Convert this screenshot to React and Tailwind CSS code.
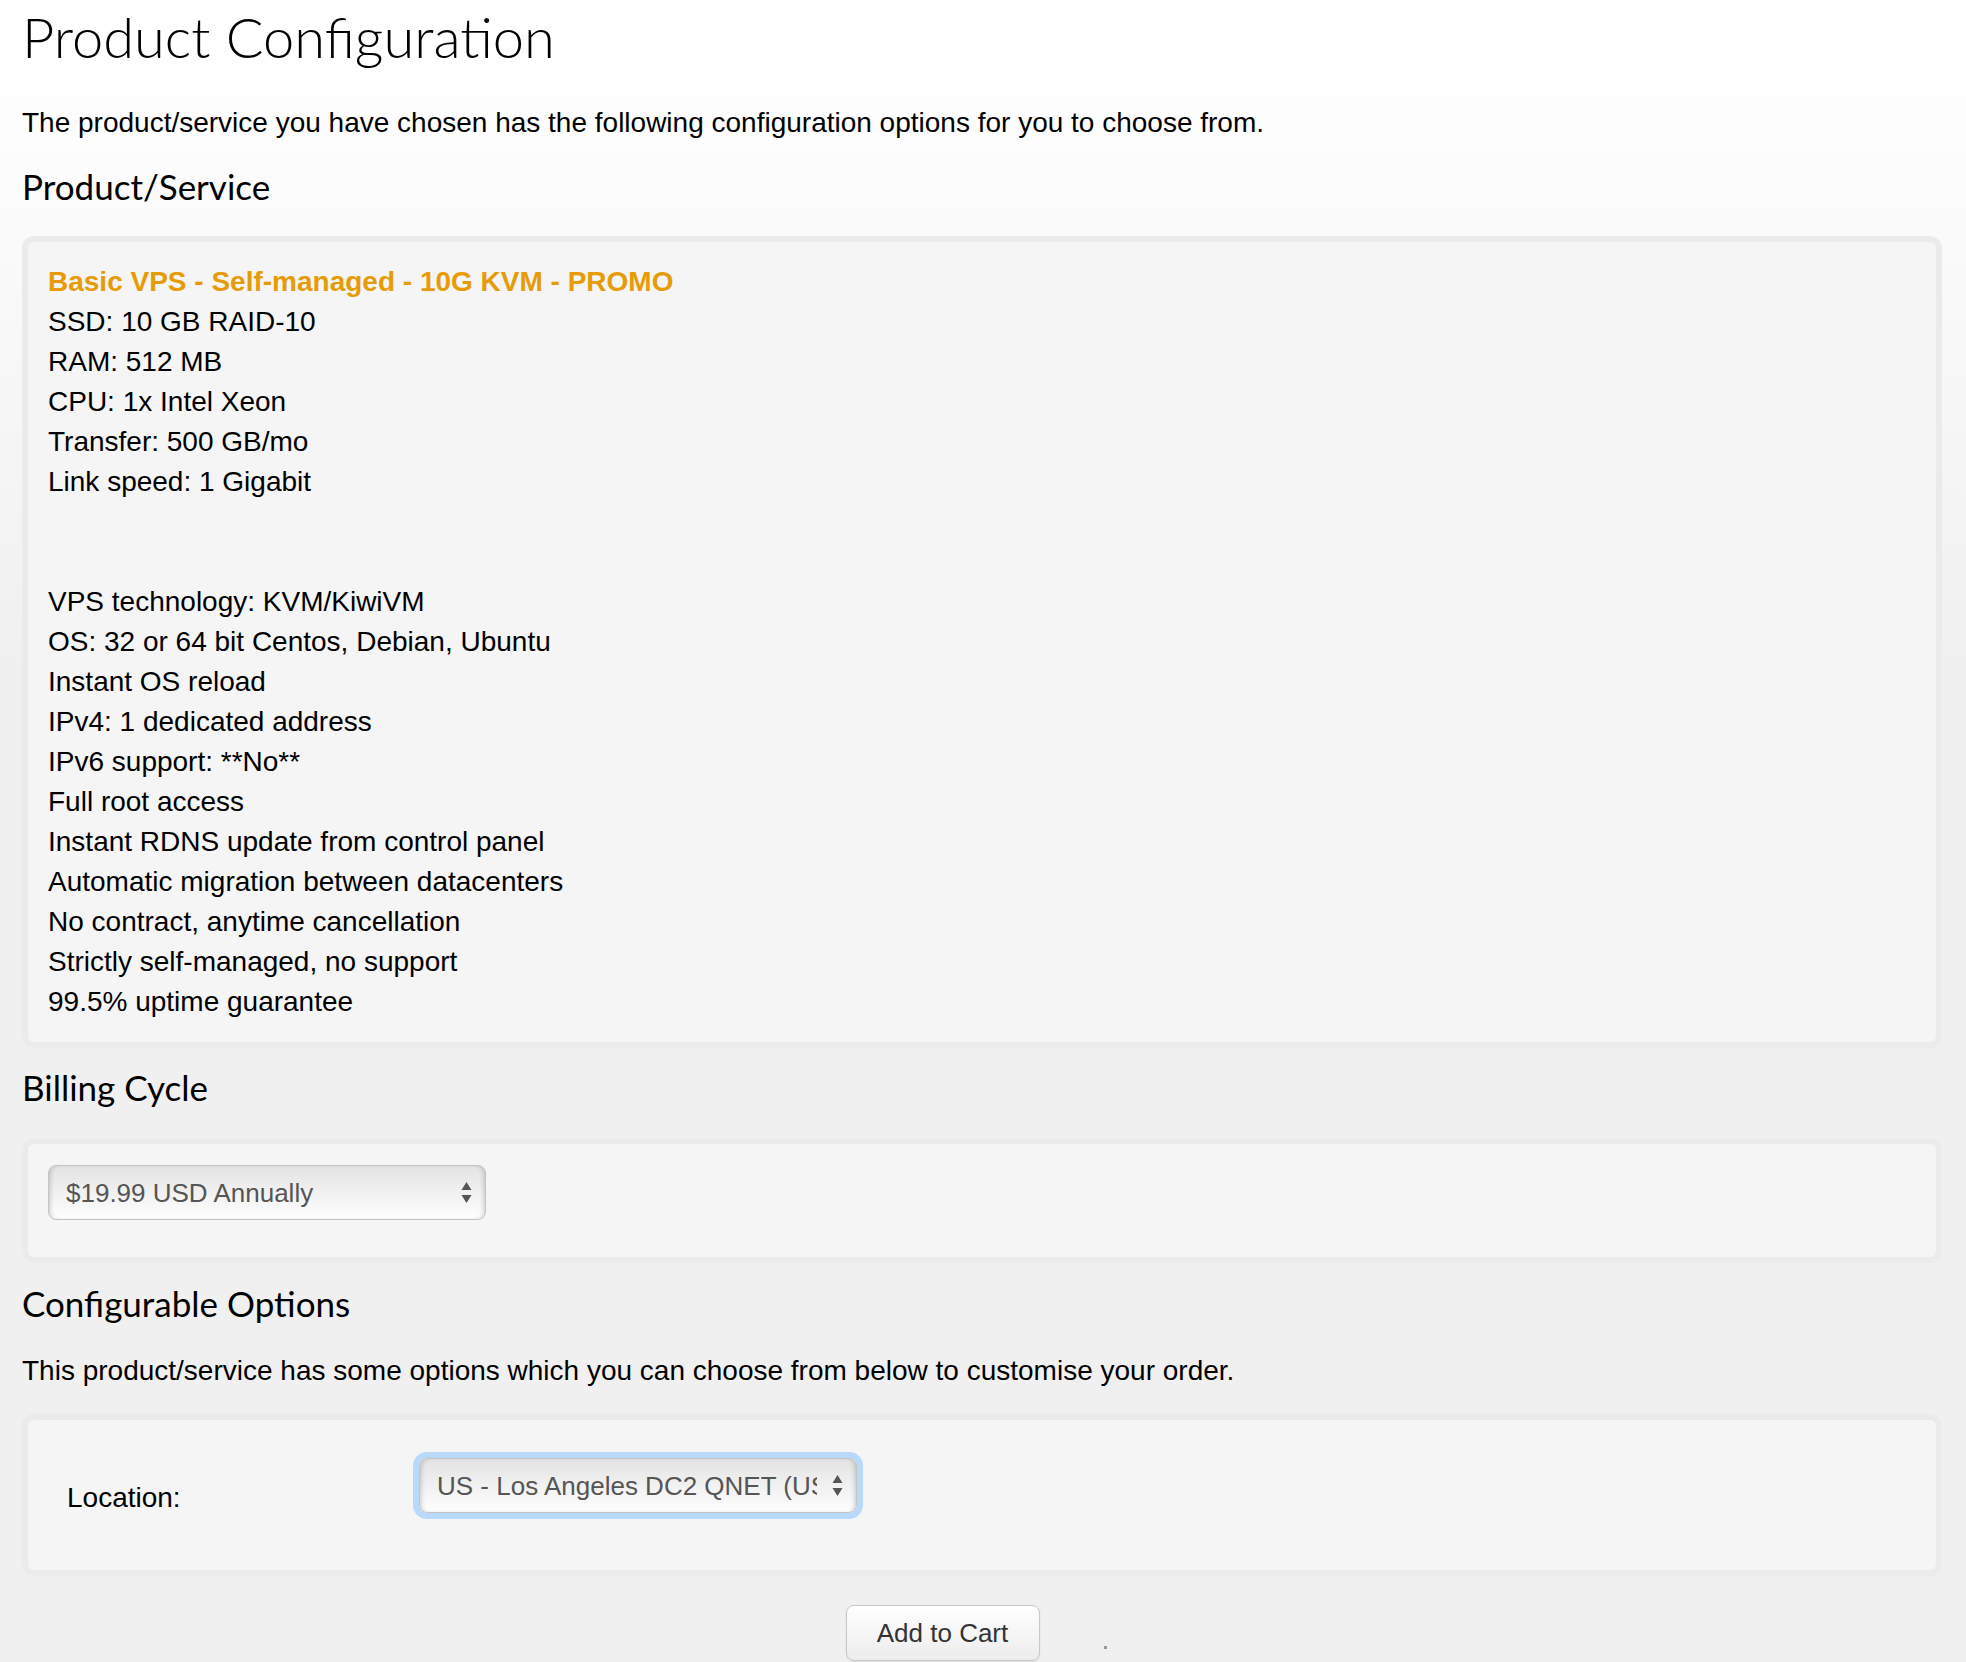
import React from "react";

const specsTop = [
  "SSD: 10 GB RAID-10",
  "RAM: 512 MB",
  "CPU: 1x Intel Xeon",
  "Transfer: 500 GB/mo",
  "Link speed: 1 Gigabit",
];

const specsBottom = [
  "VPS technology: KVM/KiwiVM",
  "OS: 32 or 64 bit Centos, Debian, Ubuntu",
  "Instant OS reload",
  "IPv4: 1 dedicated address",
  "IPv6 support: **No**",
  "Full root access",
  "Instant RDNS update from control panel",
  "Automatic migration between datacenters",
  "No contract, anytime cancellation",
  "Strictly self-managed, no support",
  "99.5% uptime guarantee",
];

const Arrows = () => (
  <svg width="11" height="21" viewBox="0 0 11 21" className="shrink-0">
    <path d="M5.5 0 L10.5 8 L0.5 8 Z" fill="#555" />
    <path d="M5.5 21 L10.5 13 L0.5 13 Z" fill="#555" />
  </svg>
);

const FakeSelect = ({ children, focused }) => (
  <div
    className={`w-[438px] h-[55px] flex items-center pl-[17px] pr-[13px] rounded-[8px] border border-[#c4c4c4] bg-linear-to-b from-[#e3e3e3] via-[#f1f1f1] to-[#fefefe] text-[#555] text-[26px] ${
      focused
        ? "shadow-[0_0_0_6px_#b8d9f9,inset_4px_0_5px_-3px_rgba(0,0,0,0.2),inset_-4px_0_5px_-3px_rgba(0,0,0,0.2)]"
        : "shadow-[inset_4px_0_5px_-3px_rgba(0,0,0,0.2),inset_-4px_0_5px_-3px_rgba(0,0,0,0.2)]"
    }`}
  >
    <div className="w-[382px] mr-[15px] overflow-hidden whitespace-nowrap">{children}</div>
    <Arrows />
  </div>
);

const Box = ({ className, children }) => (
  <div className={`rounded-[12px] border-[6px] border-[#ebebeb] bg-[#f5f5f5] ${className}`}>{children}</div>
);

const headingFont = { fontFamily: "Lato, 'Open Sans', sans-serif" };

export default function App() {
  return (
    <div
      className="min-h-screen bg-linear-to-b from-white from-[3%] to-[#f0f0f0] to-[40%] pl-[22px] pr-[24px] text-black text-[28px] leading-[40px]"
      style={{ fontFamily: "'Liberation Sans', Arial, sans-serif" }}
    >
      <h1 className="pt-[7px] text-[56px] leading-[60px] font-light" style={headingFont}>
        Product Configuration
      </h1>

      <p className="mt-[36px]">
        The product/service you have chosen has the following configuration options for you to choose from.
      </p>

      <h2 className="mt-[23px] text-[35px] leading-[40px] font-normal" style={headingFont}>
        Product/Service
      </h2>

      <Box className="mt-[30px] px-[20px] py-[20px]">
        <div className="font-bold text-[#e69c08]">Basic VPS - Self-managed - 10G KVM - PROMO</div>
        {specsTop.map((s) => (
          <div key={s}>{s}</div>
        ))}
        <div className="h-[80px]" />
        {specsBottom.map((s) => (
          <div key={s}>{s}</div>
        ))}
      </Box>

      <h2 className="mt-[19px] text-[35px] leading-[40px] font-normal" style={headingFont}>
        Billing Cycle
      </h2>

      <Box className="mt-[31px] px-[20px] pt-[21px] pb-[37px]">
        <FakeSelect>$19.99 USD Annually</FakeSelect>
      </Box>

      <h2 className="mt-[20px] text-[35px] leading-[40px] font-normal" style={headingFont}>
        Configurable Options
      </h2>

      <p className="mt-[28px]">
        This product/service has some options which you can choose from below to customise your order.
      </p>

      <Box className="mt-[23px] pl-[39px] pt-[38px] pb-[52px]">
        <div className="flex items-start">
          <div className="w-[352px] pt-[20px]">Location:</div>
          <FakeSelect focused>US - Los Angeles DC2 QNET (USA)</FakeSelect>
        </div>
      </Box>

      <div className="mt-[29px] flex justify-center items-end gap-[64px] pr-[12px]">
        <button className="w-[194px] h-[56px] rounded-[8px] border border-[#c8c8c8] bg-linear-to-b from-white to-[#ececec] text-[26px] text-[#333] shadow-[0_1px_2px_rgba(0,0,0,0.08)]">
          Add to Cart
        </button>
        <div className="w-[3px] h-[3px] bg-[#999] mb-[12px]" />
      </div>
    </div>
  );
}
